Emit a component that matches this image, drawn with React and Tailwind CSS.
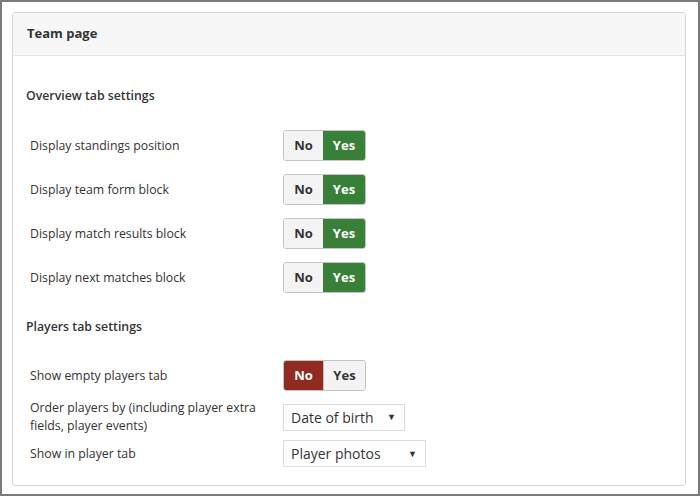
import React from 'react';

const Toggle = ({ value }) => (
  <div className="flex h-[31px] rounded-[3px] border border-[#c4c4c4] overflow-hidden text-[13px] font-bold">
    <div
      className={
        value === 'no'
          ? 'w-[39px] flex items-center justify-center bg-[#912b22] text-white'
          : 'w-[39px] flex items-center justify-center bg-[#f3f3f3] text-[#333]'
      }
    >
      No
    </div>
    <div
      className={
        value === 'yes'
          ? 'w-[42px] flex items-center justify-center bg-[#387f38] text-white'
          : 'w-[42px] flex items-center justify-center bg-[#f3f3f3] text-[#333] border-l border-[#c4c4c4]'
      }
    >
      Yes
    </div>
  </div>
);

const Select = ({ label, width }) => (
  <div className={`${width} h-[27px] border border-[#dcdcdc] bg-white flex items-center justify-between pl-[7px] pr-[8px] text-[14px] text-[#333]`}>
    <span>{label}</span>
    <span className="text-[9px]">▼</span>
  </div>
);

const Row = ({ label, children, className = '' }) => (
  <div className={`flex items-center ${className}`}>
    <div className="w-[253px] pr-3 leading-[18px]">{label}</div>
    {children}
  </div>
);

export default function App() {
  return (
    <div
      className="w-[700px] h-[496px] border-2 border-[#7b7b7b] bg-white pt-[10px] pl-[10px] text-[12.3px] text-[#333]"
      style={{ fontFamily: '"Open Sans", "Liberation Sans", sans-serif' }}
    >
      <div className="w-[674px] h-[474px] border border-[#d6d6d6] rounded-[3px]">
        <div className="h-[43px] bg-[#f7f7f7] border-b border-[#e3e3e3] flex items-center pl-[14px] text-[13px] font-bold">
          Team page
        </div>
        <div className="pl-[17px] pt-[30px]">
          <div className="-ml-[4px] h-[20px] flex items-center text-[12.3px] font-semibold">Overview tab settings</div>

          <div className="mt-[24px] flex flex-col gap-[13px]">
            <Row label="Display standings position"><Toggle value="yes" /></Row>
            <Row label="Display team form block"><Toggle value="yes" /></Row>
            <Row label="Display match results block"><Toggle value="yes" /></Row>
            <Row label="Display next matches block"><Toggle value="yes" /></Row>
          </div>

          <div className="-ml-[4px] mt-[24px] h-[20px] flex items-center font-semibold">Players tab settings</div>

          <Row label="Show empty players tab" className="mt-[23px]"><Toggle value="no" /></Row>
          <Row label="Order players by (including player extra fields, player events)" className="mt-[8px]">
            <Select label="Date of birth" width="w-[122px]" />
          </Row>
          <Row label="Show in player tab" className="mt-[5px]">
            <Select label="Player photos" width="w-[143px]" />
          </Row>
        </div>
      </div>
    </div>
  );
}
